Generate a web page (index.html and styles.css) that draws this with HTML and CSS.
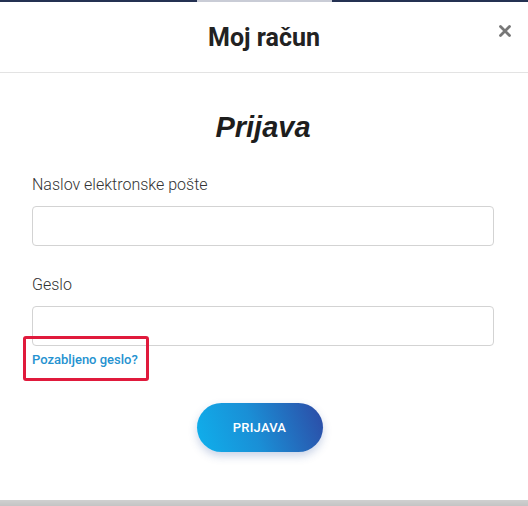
FILE: index.html
```html
<!DOCTYPE html>
<html lang="sl">
<head>
<meta charset="utf-8">
<title>Moj račun</title>
<link rel="stylesheet" href="styles.css">
</head>
<body>
<div class="topbar"><span class="topbar-mid"></span></div>
<div class="modal">
  <header class="modal-header">
    <h1 class="modal-title">Moj račun</h1>
    <button class="close" aria-label="Zapri">
      <svg width="12" height="12" viewBox="0 0 12 12"><path d="M1.5 1.5 L10.5 10.5 M10.5 1.5 L1.5 10.5" stroke="#777" stroke-width="2.8" stroke-linecap="round"/></svg>
    </button>
  </header>
  <div class="modal-body">
    <h2 class="login-title">Prijava</h2>
    <form class="form">
      <label class="field">
        <span class="label">Naslov elektronske pošte</span>
        <input class="input" type="email">
      </label>
      <label class="field field-pass">
        <span class="label">Geslo</span>
        <input class="input" type="password">
      </label>
      <div class="forgot-wrap">
        <a class="forgot" href="#">Pozabljeno geslo?</a>
        <span class="highlight"></span>
      </div>
      <div class="actions">
        <button type="button" class="btn">PRIJAVA</button>
      </div>
    </form>
  </div>
</div>
<div class="bottombar"></div>
</body>
</html>
```
FILE: styles.css
```css
* { box-sizing: border-box; }
html, body { margin: 0; padding: 0; }
body {
  width: 528px;
  height: 506px;
  background: #fff;
  font-family: Roboto, "Liberation Sans", sans-serif;
  color: #333;
  display: flex;
  flex-direction: column;
  overflow: hidden;
}
.topbar {
  height: 2px;
  background: #243152;
  display: flex;
  justify-content: center;
}
.topbar-mid {
  width: 135px;
  height: 2px;
  background: #c9ccd6;
}
.modal {
  flex: 1;
  background: #fff;
  display: flex;
  flex-direction: column;
}
.modal-header {
  position: relative;
  height: 71px;
  border-bottom: 1px solid #e3e3e3;
  display: flex;
  align-items: center;
  justify-content: center;
}
.modal-title {
  margin: 0;
  font-family: Roboto, sans-serif;
  font-weight: 700;
  font-size: 25px;
  color: #222;
  padding-top: 1px;
}
.close {
  position: absolute;
  right: 17px;
  top: 23px;
  border: 0;
  background: none;
  padding: 0;
  width: 12px;
  height: 12px;
  display: flex;
}
.modal-body {
  padding: 0 34px 0 32px;
}
.login-title {
  margin: 38px 0 0;
  text-align: center;
  font-family: "Liberation Sans", Arial, sans-serif;
  font-style: italic;
  font-weight: 700;
  font-size: 29px;
  line-height: 32px;
  color: #1d1d1d;
}
.form {
  display: flex;
  flex-direction: column;
}
.field {
  display: flex;
  flex-direction: column;
}
.field:first-child { margin-top: 32px; }
.field-pass { margin-top: 29px; }
.label {
  font-size: 16px;
  font-weight: 300;
  color: #333;
  line-height: 20px;
  margin-bottom: 11px;
}
.input {
  height: 40px;
  border: 1px solid #d3d3d3;
  border-radius: 4px;
  background: #fff;
  font: inherit;
  padding: 0 10px;
}
.forgot-wrap {
  position: relative;
  margin-top: 5px;
  height: 16px;
  display: flex;
  align-items: center;
}
.forgot {
  font-size: 13px;
  font-weight: 500;
  color: #2592d0;
  text-decoration: none;
}
.highlight {
  position: absolute;
  left: -9px;
  top: -15px;
  width: 126px;
  height: 45px;
  border: 3px solid #e01a3c;
  border-radius: 3px;
}
.actions {
  margin-top: 36px;
  display: flex;
  justify-content: center;
}
.btn {
  width: 126px;
  height: 49px;
  border: 0;
  border-radius: 25px;
  background: linear-gradient(70deg, #0fb0ec 0%, #1a8fd6 45%, #2d4aa5 100%);
  color: #fff;
  font-family: Roboto, sans-serif;
  font-weight: 500;
  font-size: 13px;
  letter-spacing: 0.2px;
  box-shadow: 0 4px 8px rgba(40, 80, 160, 0.25);
  margin-right: 7px;
}
.bottombar {
  height: 6px;
  background: linear-gradient(#d0d0d0, #c4c4c4);
}
```
